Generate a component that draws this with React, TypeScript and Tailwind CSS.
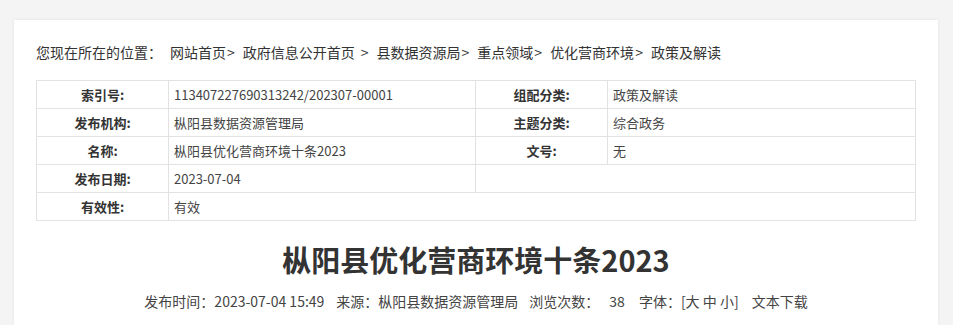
import React from "react";

const font = { fontFamily: '"Noto Sans CJK SC", "Noto Sans", sans-serif' };

function Label({ children }: { children: React.ReactNode }) {
  return (
    <td className="border border-[#e2e2e2] text-center font-bold text-[#333] h-[28px] p-0">
      {children}
    </td>
  );
}
function Val({ children, colSpan }: { children?: React.ReactNode; colSpan?: number }) {
  return (
    <td colSpan={colSpan} className="border border-[#e2e2e2] text-left text-[#444] h-[28px] py-0 pl-[5px]">
      {children}
    </td>
  );
}

function Sep({ wide }: { wide?: boolean }) {
  return <span className={wide ? "ml-[6px] mr-[8px]" : "ml-[1px] mr-[8px]"}>&gt;</span>;
}

export default function App() {
  return (
    <div className="min-h-[325px] bg-[#f4f4f4] pt-[20px] pl-[14px] pr-[15px]" style={font}>
      <div className="bg-white min-h-[305px] px-[22px] pt-[20px] shadow-[0_0_3px_rgba(0,0,0,0.08)]">
        <div className="flex text-[14px] leading-[24px] text-[#333] whitespace-nowrap">
          <span className="mr-[8px]">您现在所在的位置：</span>
          <span>网站首页</span>
          <Sep />
          <span>政府信息公开首页</span>
          <Sep wide />
          <span>县数据资源局</span>
          <Sep />
          <span>重点领域</span>
          <Sep />
          <span>优化营商环境</span>
          <Sep />
          <span>政策及解读</span>
        </div>
        <table className="mt-[16px] w-full border-collapse text-[13px] leading-[20px] table-fixed">
          <colgroup>
            <col className="w-[132px]" />
            <col className="w-[307px]" />
            <col className="w-[132px]" />
            <col />
          </colgroup>
          <tbody>
            <tr>
              <Label>索引号:</Label>
              <Val>113407227690313242/202307-00001</Val>
              <Label>组配分类:</Label>
              <Val>政策及解读</Val>
            </tr>
            <tr>
              <Label>发布机构:</Label>
              <Val>枞阳县数据资源管理局</Val>
              <Label>主题分类:</Label>
              <Val>综合政务</Val>
            </tr>
            <tr>
              <Label>名称:</Label>
              <Val>枞阳县优化营商环境十条2023</Val>
              <Label>文号:</Label>
              <Val>无</Val>
            </tr>
            <tr>
              <Label>发布日期:</Label>
              <Val>2023-07-04</Val>
              <Val colSpan={2} />
            </tr>
            <tr>
              <Label>有效性:</Label>
              <Val colSpan={3}>有效</Val>
            </tr>
          </tbody>
        </table>
        <h1 className="mt-[18px] text-center text-[29px] leading-[40px] font-bold text-[#333]">
          枞阳县优化营商环境十条2023
        </h1>
        <div className="mt-[12px] flex justify-center text-[14px] leading-[20px] text-[#444] whitespace-nowrap">
          <span>发布时间：2023-07-04 15:49</span>
          <span className="ml-[12px]">来源：枞阳县数据资源管理局</span>
          <span className="ml-[11px]">浏览次数：</span>
          <span className="ml-[10px]">38</span>
          <span className="ml-[14px]">字体：[大 中 小]</span>
          <span className="ml-[13px]">文本下载</span>
        </div>
      </div>
    </div>
  );
}
